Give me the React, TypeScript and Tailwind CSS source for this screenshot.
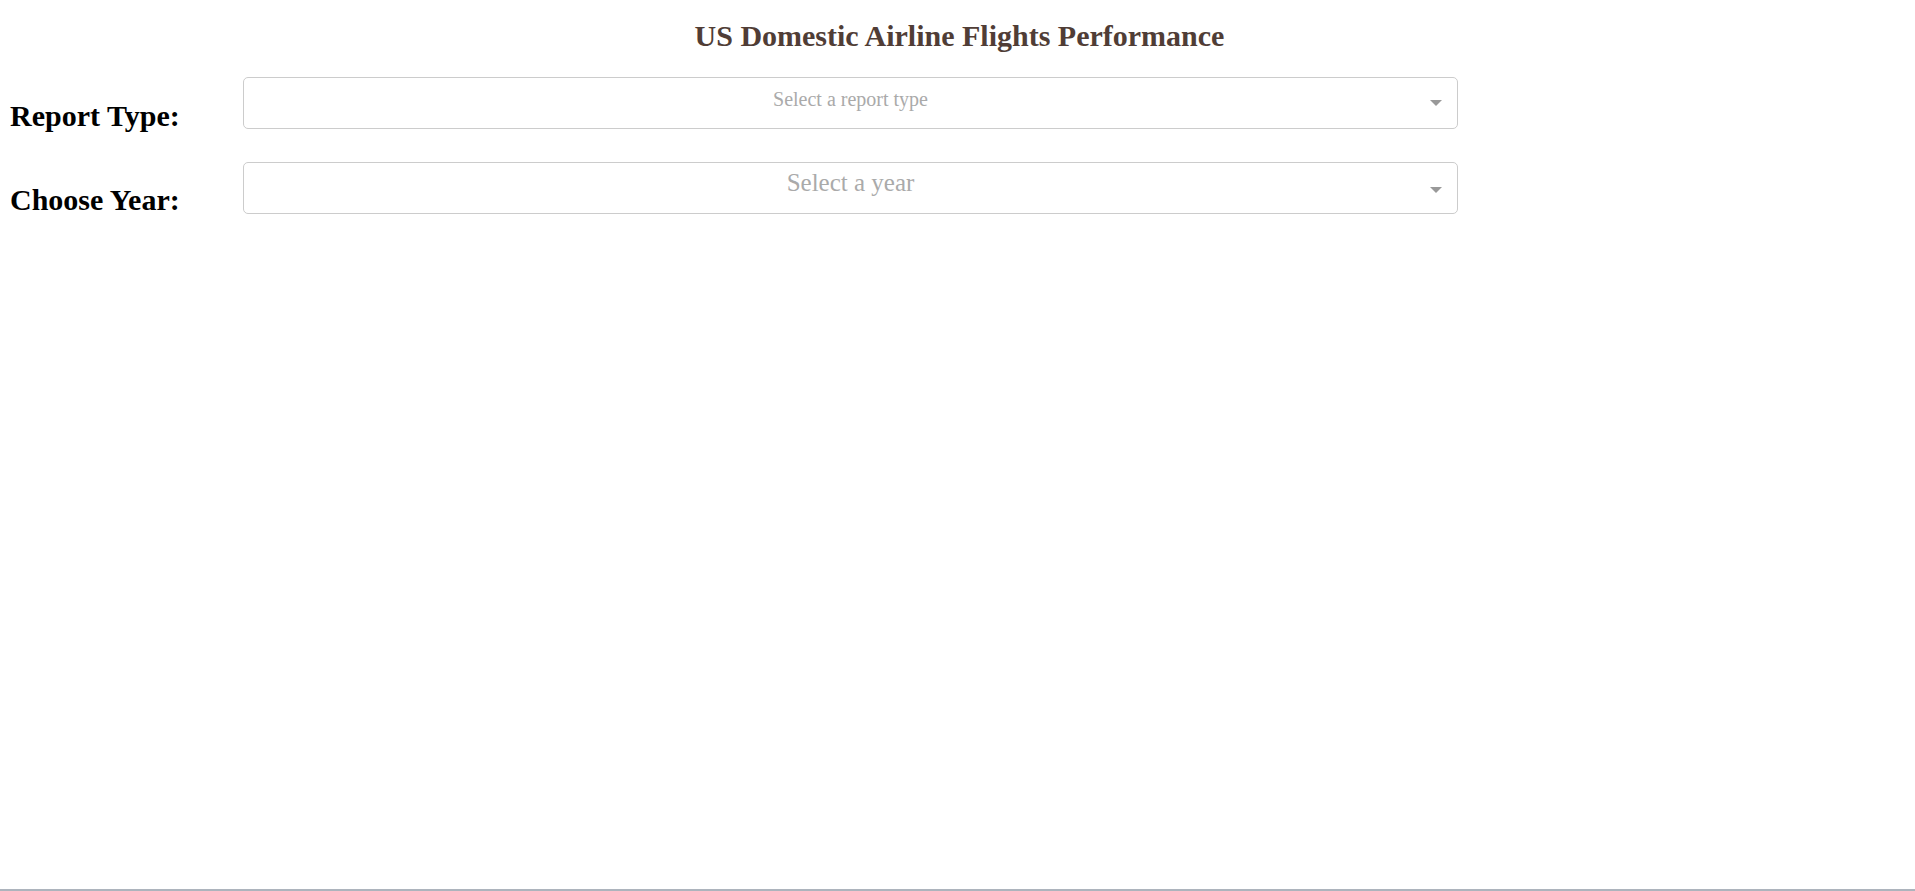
import React from "react";

export default function App() {
  return (
    <div className="h-[891px] w-full flex flex-col bg-white font-['Liberation_Serif',serif]">
      <div className="flex-1">
        <h1 className="pt-[19px] pl-[14px] pr-[10px] text-center text-[30px] leading-[34px] font-bold text-[#503D36]">
          US Domestic Airline Flights Performance
        </h1>

        <div className="mt-[24px] ml-[10px] flex h-[52px]">
          <div className="w-[233px] shrink-0">
            <h2 className="mt-[22px] text-[30px] leading-[34px] font-bold text-black whitespace-nowrap">
              Report Type:
            </h2>
          </div>
          <div className="relative w-[1215px] h-[52px] shrink-0 border border-[#cccccc] rounded-[5px] pt-[9px] text-center text-[20px] leading-[24px] text-[#aaaaaa]">
            Select a report type
            <span className="absolute right-[15px] top-[22px] w-0 h-0 border-t-[6px] border-x-[6px] border-t-[#999999] border-x-transparent" />
          </div>
        </div>

        <div className="mt-[33px] ml-[10px] flex h-[52px]">
          <div className="w-[233px] shrink-0">
            <h2 className="mt-[21px] text-[30px] leading-[34px] font-bold text-black whitespace-nowrap">
              Choose Year:
            </h2>
          </div>
          <div className="relative w-[1215px] h-[52px] shrink-0 border border-[#cccccc] rounded-[5px] pt-[5px] text-center text-[25px] leading-[30px] text-[#aaaaaa]">
            Select a year
            <span className="absolute right-[15px] top-[24px] w-0 h-0 border-t-[6px] border-x-[6px] border-t-[#999999] border-x-transparent" />
          </div>
        </div>
      </div>
      <div className="h-[2px] bg-[#adb4bd]" />
    </div>
  );
}
